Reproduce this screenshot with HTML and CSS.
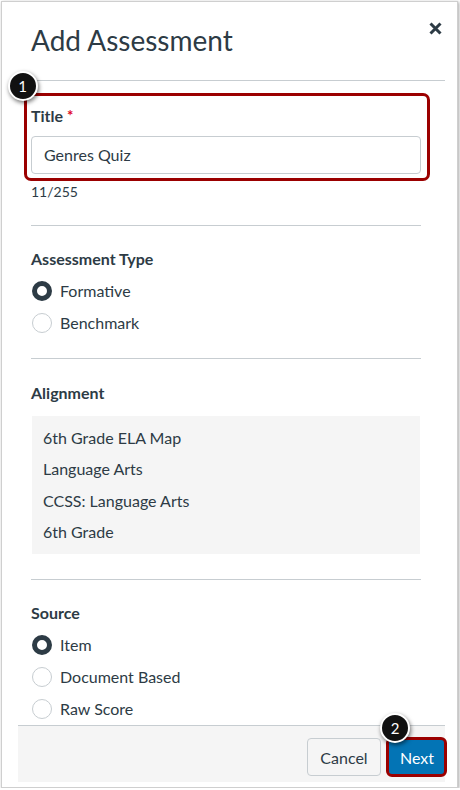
FILE: index.html
```html
<!DOCTYPE html>
<html lang="en">
<head>
<meta charset="utf-8">
<title>Add Assessment</title>
<link rel="stylesheet" href="styles.css">
</head>
<body>
<div class="frame">
  <div class="modal">
    <div class="header">
      <h1 class="heading">Add Assessment</h1>
      <button class="close" aria-label="Close">
        <svg viewBox="0 0 13 13" width="13" height="13"><path d="M1.5 1.5 L11.5 11.5 M11.5 1.5 L1.5 11.5" stroke="#2d3b45" stroke-width="3" fill="none"/></svg>
      </button>
    </div>
    <div class="body">
      <div class="highlight">
        <span class="badge badge-one">1</span>
        <div class="label">Title<span class="req">*</span></div>
        <div class="input">Genres Quiz</div>
      </div>
      <div class="count">11/255</div>

      <hr class="divider d1">
      <div class="section s1">
        <div class="label">Assessment Type</div>
        <div class="option"><span class="radio checked"></span>Formative</div>
        <div class="option"><span class="radio"></span>Benchmark</div>
      </div>

      <hr class="divider d2">
      <div class="section s2">
        <div class="label">Alignment</div>
        <div class="align-box">
          <div class="align-item">6th Grade ELA Map</div>
          <div class="align-item">Language Arts</div>
          <div class="align-item">CCSS: Language Arts</div>
          <div class="align-item">6th Grade</div>
        </div>
      </div>

      <hr class="divider d3">
      <div class="section s3">
        <div class="label">Source</div>
        <div class="option"><span class="radio checked"></span>Item</div>
        <div class="option"><span class="radio"></span>Document Based</div>
        <div class="option"><span class="radio"></span>Raw Score</div>
      </div>
    </div>
    <div class="footer">
      <button class="btn btn-cancel">Cancel</button>
      <button class="btn btn-next">Next<span class="next-ring"></span><span class="badge badge-two">2</span></button>
    </div>
  </div>
</div>
</body>
</html>
```
FILE: styles.css
```css
html, body {
  margin: 0;
  padding: 0;
  background: #ffffff;
}
body {
  font-family: Lato, "Noto Sans", "Liberation Sans", sans-serif;
  color: #2d3b45;
}
.frame {
  margin: 1px 0 0 1px;
  width: 457px;
  height: 787px;
  box-sizing: border-box;
  border: 1px solid #cfcfcf;
  box-shadow: 1px 1px 3px rgba(0, 0, 0, 0.35);
  background: #fff;
}
.modal {
  margin-left: 16px;
  width: 427px;
  height: 780px;
  display: flex;
  flex-direction: column;
}
.header {
  margin-left: 13px;
  height: 78px;
  box-sizing: content-box;
  border-bottom: 1px solid #c7cdd1;
  display: flex;
  justify-content: space-between;
  align-items: flex-start;
  padding-right: 3px;
}
.heading {
  margin: 21px 0 0 0;
  font-size: 28px;
  line-height: 34px;
  font-weight: 400;
  color: #2d3b45;
}
.close {
  margin-top: 20px;
  border: 0;
  padding: 0;
  background: transparent;
  width: 13px;
  height: 13px;
  display: block;
}
.close svg { display: block; }
.body {
  flex: 1;
  min-height: 0;
  padding: 0 24px 0 13px;
}
.label {
  font-size: 16px;
  line-height: 24px;
  font-weight: 700;
}
.req {
  color: #e0061f;
  font-size: 15px;
  margin-left: 4px;
  position: relative;
  top: -1px;
}
.highlight {
  position: relative;
  margin: 12px -9px 0 -7px;
  border: 3px solid #9b0000;
  border-radius: 7px;
  padding: 8px 6px 4px 4px;
}
.highlight .label { margin-bottom: 8px; }
.input {
  height: 38px;
  box-sizing: border-box;
  border: 1px solid #c7cdd1;
  border-radius: 4px;
  padding: 0 12px;
  font-size: 16px;
  line-height: 36px;
  background: #fff;
}
.badge {
  position: absolute;
  z-index: 2;
  width: 26px;
  height: 26px;
  border-radius: 50%;
  background: #111;
  border: 2px solid #fff;
  box-shadow: 1px 2px 4px rgba(0, 0, 0, 0.55);
  color: #fff;
  font-size: 15px;
  line-height: 26px;
  text-align: center;
  font-weight: 400;
  font-family: Lato, "Liberation Sans", sans-serif;
}
.badge-one {
  left: -19.5px;
  top: -25px;
}
.count {
  font-size: 14px;
  line-height: 21px;
}
.divider {
  border: 0;
  border-top: 1px solid #c7cdd1;
  margin: 0;
  height: 0;
}
.d1 { margin-top: 23px; }
.d2 { margin-top: 23px; }
.d3 { margin-top: 25px; }
.s1 { margin-top: 21px; }
.s2 { margin-top: 22px; }
.s3 { margin-top: 21px; }
.option {
  display: flex;
  align-items: center;
  font-size: 16px;
  line-height: 24px;
  margin-top: 8px;
}
.radio {
  width: 20px;
  height: 20px;
  box-sizing: border-box;
  border-radius: 50%;
  border: 1px solid #c7cdd1;
  margin: 0 8px 0 1px;
  background: #fff;
  flex: none;
}
.radio.checked {
  border: 5px solid #2d3b45;
}
.align-box {
  margin: 11px 1px 0 1px;
  background: #f5f5f5;
  padding: 10px 11px;
}
.align-item {
  font-size: 16px;
  line-height: 24px;
}
.align-item + .align-item { margin-top: 7.33px; }
.footer {
  border-top: 1px solid #c7cdd1;
  background: #f5f5f5;
  display: flex;
  justify-content: flex-end;
  align-items: flex-start;
  gap: 8px;
  padding-top: 12px;
  box-sizing: content-box;
  height: 44px;
}
.btn {
  position: relative;
  height: 38px;
  box-sizing: border-box;
  border-radius: 4px;
  font-family: Lato, "Noto Sans", "Liberation Sans", sans-serif;
  font-size: 16px;
  padding: 0;
  text-align: center;
}
.btn-cancel {
  width: 74px;
  background: #f5f5f5;
  border: 1px solid #c7cdd1;
  color: #2d3b45;
}
.btn-next {
  width: 56px;
  background: #0374b5;
  border: 1px solid #0374b5;
  color: #fff;
}
.next-ring {
  position: absolute;
  left: -4px;
  right: -3px;
  top: -2px;
  bottom: -2px;
  border: 3px solid #9b0000;
  border-radius: 6px;
}
.badge-two {
  left: -10px;
  top: -26px;
}
```
